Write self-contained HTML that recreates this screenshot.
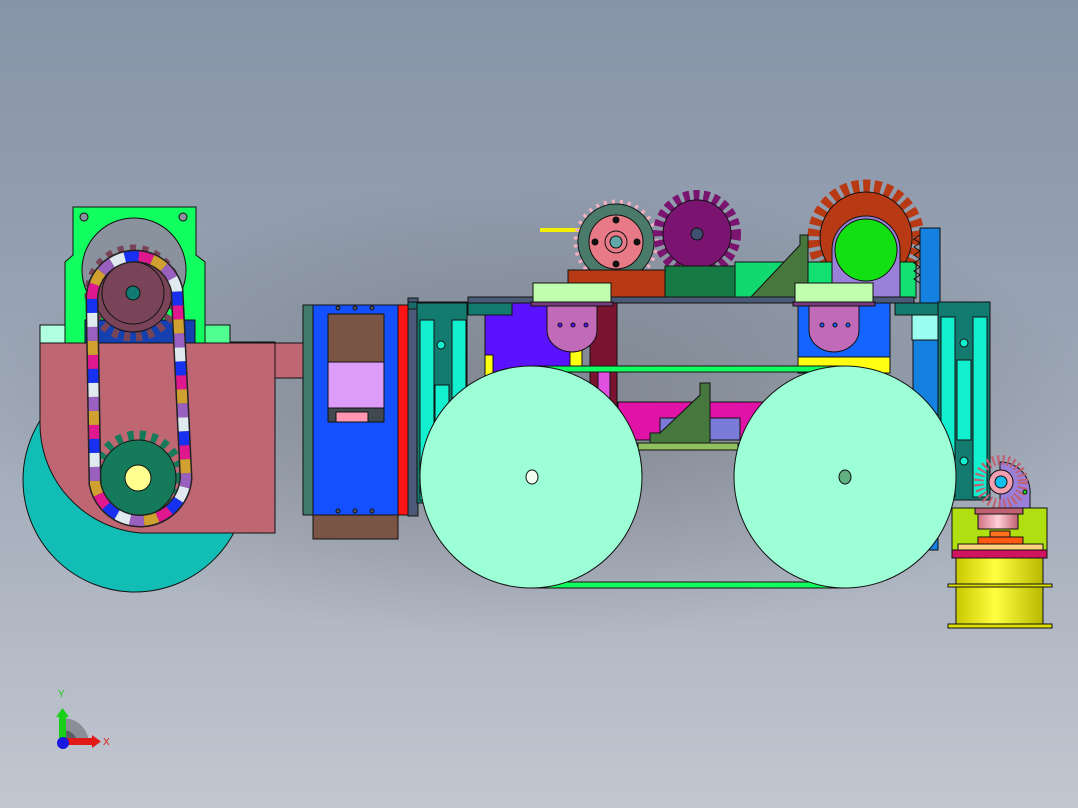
<!DOCTYPE html>
<html><head><style>
html,body{margin:0;padding:0}
body{width:1078px;height:808px;overflow:hidden;background:linear-gradient(180deg,#8794a7 0%,#98a3b3 40%,#b0b7c3 75%,#c2c7d1 100%);}
svg{display:block}
</style></head><body>
<svg width="1078" height="808" viewBox="0 0 1078 808" xmlns="http://www.w3.org/2000/svg" stroke="#111" stroke-width="1">
<defs>
<linearGradient id="yel" x1="0" x2="1"><stop offset="0" stop-color="#c8c800"/><stop offset="0.45" stop-color="#ffff40"/><stop offset="1" stop-color="#b8b800"/></linearGradient>
<linearGradient id="pk" x1="0" x2="1"><stop offset="0" stop-color="#d07080"/><stop offset="0.5" stop-color="#ffd0d8"/><stop offset="1" stop-color="#c06070"/></linearGradient>
<radialGradient id="sh" cx="0.5" cy="0.5" r="0.5"><stop offset="0" stop-color="#444" stop-opacity="0.35"/><stop offset="0.7" stop-color="#444" stop-opacity="0.12"/><stop offset="1" stop-color="#444" stop-opacity="0"/></radialGradient>
</defs>
<ellipse cx="540" cy="410" rx="560" ry="230" fill="url(#sh)" stroke="none"/>

<!-- ===== LEFT ASSEMBLY ===== -->
<circle cx="135" cy="480" r="112" fill="#12bdb5"/>
<path d="M73,207 H196 V255 L205,262 V345 H65 V262 L73,255 Z" fill="#12ff60"/>
<circle cx="84" cy="217" r="4" fill="#8a929e"/>
<circle cx="183" cy="217" r="4" fill="#8a929e"/>
<circle cx="134" cy="270" r="52" fill="#8a929e"/>
<rect x="40" y="325" width="25" height="19" fill="#b0ffe0"/>
<rect x="205" y="325" width="25" height="19" fill="#50ff90"/>
<rect x="85" y="320" width="110" height="24" fill="#1440b0"/>
<rect x="230" y="342" width="45" height="4" fill="#1830a0"/>
<path d="M40,343 H275 V533 H140 A110,110 0 0 1 40,420 Z" fill="#bf6673"/>
<rect x="275" y="343" width="29" height="35" fill="#bf6673"/>
<circle cx="133" cy="293" r="44" fill="none" stroke="#7a4458" stroke-width="9" stroke-dasharray="6 6"/>
<circle cx="133" cy="293" r="39" fill="#7a4458"/>
<circle cx="133" cy="293" r="31" fill="none"/>
<circle cx="133" cy="293" r="7" fill="#127a72"/>
<circle cx="138" cy="478" r="43" fill="none" stroke="#147a5a" stroke-width="9" stroke-dasharray="6 6"/>
<circle cx="138" cy="478" r="38" fill="#147a5a"/>
<circle cx="138" cy="478" r="13" fill="#ffff90"/>
<path d="M92,298 A43,43 0 0 1 177,290 L186,478 A46,46 0 0 1 95,484 Z" fill="none" stroke="#222" stroke-width="13"/>
<path d="M92,298 A43,43 0 0 1 177,290 L186,478 A46,46 0 0 1 95,484 Z" fill="none" stroke="#e01890" stroke-width="10" stroke-dasharray="14 56"/>
<path d="M92,298 A43,43 0 0 1 177,290 L186,478 A46,46 0 0 1 95,484 Z" fill="none" stroke="#1830f0" stroke-width="10" stroke-dasharray="14 56" stroke-dashoffset="14"/>
<path d="M92,298 A43,43 0 0 1 177,290 L186,478 A46,46 0 0 1 95,484 Z" fill="none" stroke="#e0e8f0" stroke-width="10" stroke-dasharray="14 56" stroke-dashoffset="28"/>
<path d="M92,298 A43,43 0 0 1 177,290 L186,478 A46,46 0 0 1 95,484 Z" fill="none" stroke="#9a60c0" stroke-width="10" stroke-dasharray="14 56" stroke-dashoffset="42"/>
<path d="M92,298 A43,43 0 0 1 177,290 L186,478 A46,46 0 0 1 95,484 Z" fill="none" stroke="#d0a030" stroke-width="10" stroke-dasharray="14 56" stroke-dashoffset="56"/>

<!-- ===== MOTOR BLOCK ===== -->
<rect x="303" y="305" width="10" height="210" fill="#407a6a"/>
<rect x="313" y="305" width="85" height="210" fill="#1450ff"/>
<rect x="398" y="305" width="10" height="210" fill="#ff1414"/>
<rect x="328" y="314" width="56" height="48" fill="#7a5444"/>
<rect x="328" y="362" width="56" height="46" fill="#dc9cf8"/>
<rect x="328" y="408" width="56" height="14" fill="#404850"/>
<rect x="336" y="412" width="32" height="10" fill="#ff98b0"/>
<rect x="313" y="515" width="85" height="24" fill="#7a5444"/>
<circle cx="338" cy="308" r="2" fill="#556"/><circle cx="355" cy="308" r="2" fill="#556"/><circle cx="372" cy="308" r="2" fill="#556"/>
<circle cx="338" cy="511" r="2" fill="#556"/><circle cx="355" cy="511" r="2" fill="#556"/><circle cx="372" cy="511" r="2" fill="#556"/>
<rect x="408" y="298" width="10" height="218" fill="#4a5a78"/>

<!-- ===== TOP GEARS ===== -->
<rect x="540" y="228" width="40" height="4" fill="#f0f000" stroke="none"/>
<circle cx="616" cy="242" r="40" fill="none" stroke="#f0b0c0" stroke-width="5" stroke-dasharray="3 5"/>
<circle cx="616" cy="242" r="38" fill="#4a7a6a"/>
<circle cx="616" cy="242" r="27" fill="#e87a88"/>
<circle cx="616" cy="242" r="11" fill="none"/>
<circle cx="616" cy="242" r="6" fill="#60a8a8"/>
<circle cx="616" cy="220" r="3" fill="#111"/><circle cx="616" cy="264" r="3" fill="#111"/><circle cx="595" cy="242" r="3" fill="#111"/><circle cx="637" cy="242" r="3" fill="#111"/>
<circle cx="697" cy="234" r="39" fill="none" stroke="#7a1470" stroke-width="10" stroke-dasharray="6 4"/>
<circle cx="697" cy="234" r="34" fill="#7a1470"/>
<circle cx="697" cy="234" r="6" fill="#405070"/>
<circle cx="866" cy="238" r="52" fill="none" stroke="#b83a14" stroke-width="13" stroke-dasharray="7 4"/>
<circle cx="866" cy="238" r="46" fill="#b83a14"/>
<path d="M832,298 V250 A34,34 0 0 1 900,250 V298 Z" fill="#9a80d8"/>
<ellipse cx="866" cy="250" rx="31" ry="31" fill="#12e012"/>
<rect x="808" y="262" width="24" height="36" fill="#12e070"/>
<rect x="900" y="262" width="16" height="36" fill="#12e070"/>
<rect x="920" y="228" width="20" height="130" fill="#1480e0"/>
<path d="M920,235 l-6,4 6,4 -6,4 6,4 -6,4 6,4 -6,4 6,4 -6,4 6,4 -6,4 6,4 M920,350 l-6,4 6,4 -6,4 6,4 -6,4 6,4 -6,4 6,4 -6,4 6,4" fill="none"/>
<rect x="568" y="270" width="97" height="28" fill="#b83a14"/>
<rect x="665" y="266" width="70" height="32" fill="#167a44"/>
<rect x="735" y="262" width="50" height="36" fill="#12d870"/>
<path d="M750,298 L800,245 V235 H808 V298 Z" fill="#46783e"/>

<rect x="468" y="297" width="446" height="6" fill="#4a5a78"/>
<rect x="485" y="303" width="85" height="110" fill="#5a12ff"/>
<rect x="485" y="355" width="8" height="55" fill="#ffff12"/>
<rect x="570" y="350" width="12" height="20" fill="#ffff12"/>
<rect x="590" y="303" width="27" height="105" fill="#7a1430"/>
<rect x="598" y="370" width="12" height="40" fill="#e050e0"/>
<rect x="798" y="303" width="92" height="57" fill="#1464ff"/>
<rect x="798" y="357" width="92" height="16" fill="#ffff12"/>
<rect x="533" y="283" width="78" height="20" fill="#c0ffb0"/>
<rect x="795" y="283" width="78" height="20" fill="#c0ffb0"/>
<rect x="531" y="302" width="82" height="4" fill="#7a3a80"/>
<rect x="793" y="302" width="82" height="4" fill="#7a3a80"/>
<path d="M547,306 H597 V330 A25,22 0 0 1 547,330 Z" fill="#c06ab8"/>
<path d="M809,306 H859 V330 A25,22 0 0 1 809,330 Z" fill="#c06ab8"/>
<circle cx="560" cy="325" r="2" fill="#5a12ff"/><circle cx="573" cy="325" r="2" fill="#5a12ff"/><circle cx="586" cy="325" r="2" fill="#5a12ff"/>
<circle cx="822" cy="325" r="2" fill="#1464ff"/><circle cx="835" cy="325" r="2" fill="#1464ff"/><circle cx="848" cy="325" r="2" fill="#1464ff"/>
<rect x="618" y="402" width="145" height="38" fill="#e012a8"/>
<rect x="660" y="418" width="80" height="22" fill="#7a7ad8"/>
<path d="M650,443 V433 H660 L700,395 V383 H710 V443 Z" fill="#46783e"/>
<rect x="638" y="443" width="100" height="7" fill="#8ec060"/>

<rect x="408" y="302" width="60" height="7" fill="#1a6a6a"/>
<rect x="417" y="303" width="50" height="200" fill="#127a6e"/>
<rect x="420" y="320" width="14" height="180" fill="#12f0d0"/>
<rect x="452" y="320" width="14" height="180" fill="#12f0d0"/>
<rect x="435" y="385" width="14" height="75" fill="#12f0d0"/>
<circle cx="441" cy="345" r="4" fill="#12f0d0"/>
<rect x="468" y="303" width="44" height="12" fill="#127a6e"/>
<rect x="895" y="303" width="45" height="12" fill="#127a6e"/>
<rect x="912" y="315" width="28" height="25" fill="#9afff0"/>
<rect x="938" y="302" width="52" height="198" fill="#127a6e"/>
<rect x="941" y="317" width="14" height="180" fill="#12f0d0"/>
<rect x="973" y="317" width="14" height="180" fill="#12f0d0"/>
<rect x="957" y="360" width="14" height="80" fill="#12f0d0"/>
<circle cx="964" cy="343" r="4" fill="#12f0d0"/>
<circle cx="964" cy="461" r="4" fill="#12f0d0"/>
<rect x="913" y="340" width="25" height="210" fill="#1480e0"/>

<path d="M531,366 H845 V372 H531 Z" fill="#12ff60"/>
<path d="M531,582 H845 V588 H531 Z" fill="#12ff60"/>
<circle cx="531" cy="477" r="111" fill="#9cffd6"/>
<circle cx="845" cy="477" r="111" fill="#9cffd6"/>
<ellipse cx="532" cy="477" rx="6" ry="7" fill="#f0fff0"/>
<ellipse cx="845" cy="477" rx="6" ry="7" fill="#60b080"/>

<path d="M1000,462 A30,30 0 0 1 1030,495 V508 H1000 Z" fill="#9a80d8"/>
<circle cx="1001" cy="482" r="22" fill="none" stroke="#c06070" stroke-width="10" stroke-dasharray="2 3"/>
<circle cx="1001" cy="482" r="12" fill="#f0a0b0"/>
<circle cx="1001" cy="482" r="6" fill="#12c0f0"/>
<circle cx="1025" cy="492" r="2" fill="#12e012"/>
<rect x="952" y="508" width="95" height="44" fill="#b0e012"/>
<rect x="978" y="511" width="40" height="18" fill="url(#pk)"/>
<rect x="975" y="508" width="48" height="6" fill="#c06070"/>
<rect x="990" y="531" width="20" height="6" fill="#ff7020"/>
<rect x="978" y="537" width="45" height="7" fill="#ff5a12"/>
<rect x="958" y="544" width="85" height="6" fill="#ffd080"/>
<rect x="952" y="550" width="95" height="8" fill="#d01460"/>
<rect x="956" y="558" width="87" height="68" fill="url(#yel)"/>
<rect x="948" y="584" width="104" height="3" fill="#e0e000"/>
<rect x="948" y="624" width="104" height="4" fill="#e0e000"/>

<g stroke="none">
<path d="M63,745 V718 A26,26 0 0 1 89,744 Z" fill="#8a8e96"/>
<path d="M63,745 V730 A15,15 0 0 1 78,745 Z" fill="#5a5e66"/>
<rect x="59" y="716" width="7" height="28" fill="#18d018"/>
<path d="M56,717 L62.5,708 L69,717 Z" fill="#18d018"/>
<rect x="63" y="738" width="30" height="7" fill="#e01818"/>
<path d="M92,735 L101,741.5 L92,748 Z" fill="#e01818"/>
<circle cx="63" cy="743" r="6" fill="#1818e0"/>
</g>
<text x="58" y="697" font-family="Liberation Sans, sans-serif" font-size="10" fill="#18d018" stroke="none">Y</text>
<text x="103" y="745" font-family="Liberation Sans, sans-serif" font-size="10" fill="#e01818" stroke="none">X</text>
</svg>
</body></html>
